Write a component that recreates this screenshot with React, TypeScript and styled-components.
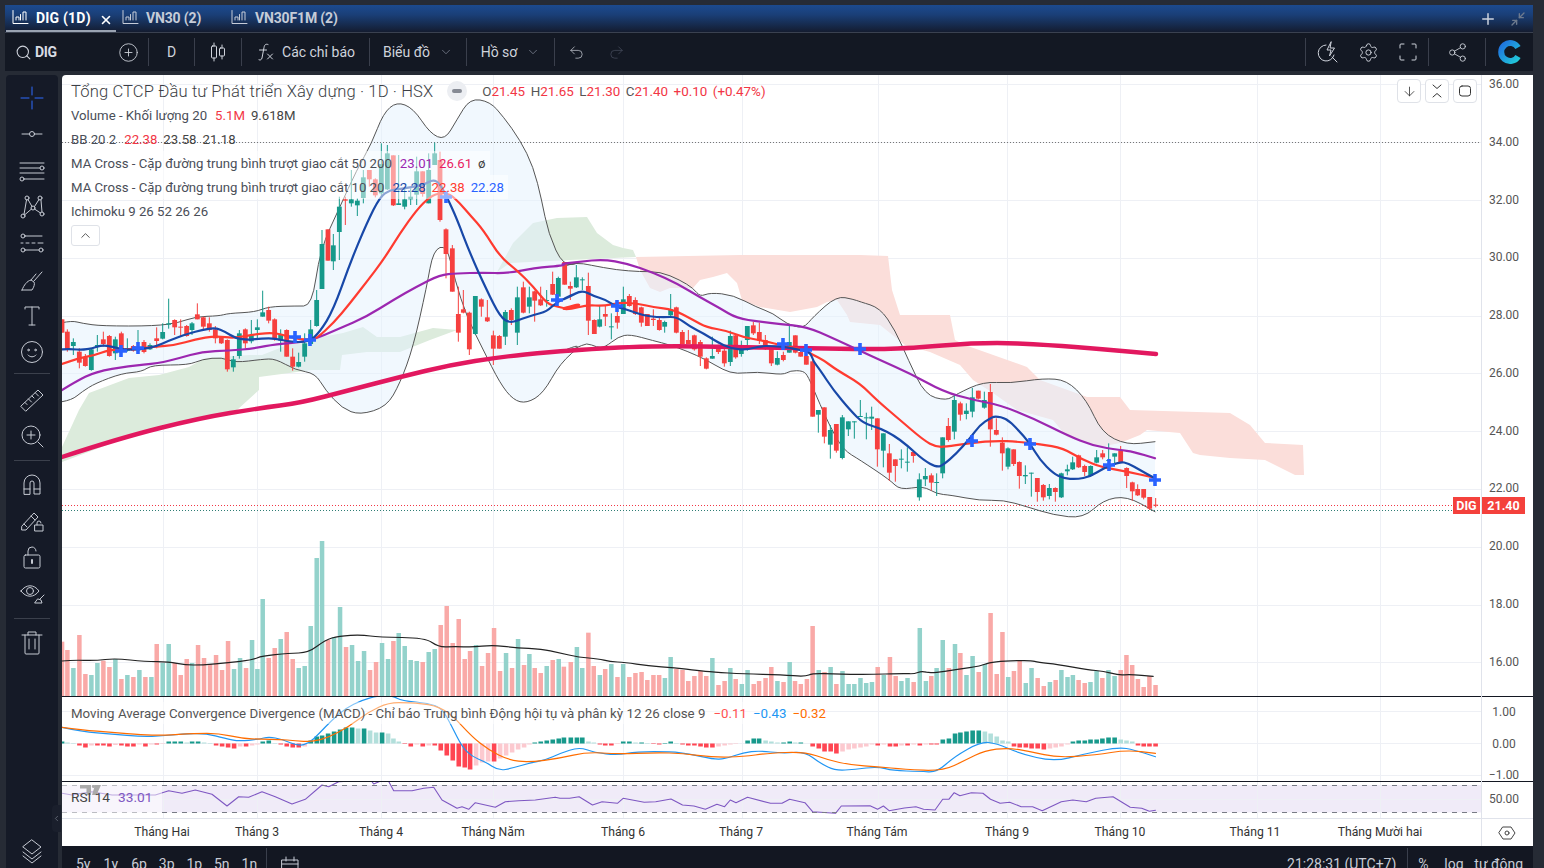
import React from "react";
import styled, { createGlobalStyle } from "styled-components";
import { Search, CirclePlus, Undo2, Redo2, ChevronDown, Settings, Share2, Plus, Minimize2, X, ChevronUp, ArrowDown, ChevronLeft } from "lucide-react";

type P = [number, number];
const z = (x0: number, y0: number, pts: number[][], sx = 3, sy = 3): P[] => pts.map(([x, y]) => [x0 + x / sx, y0 + y / sy]);
const path = (p: P[]) => p.map((q, i) => `${i ? "L" : "M"}${q[0].toFixed(1)} ${q[1].toFixed(1)}`).join("");
const smoothBody = (p: P[]) => {
  let d = "";
  for (let i = 1; i < p.length - 1; i++) {
    const mx = (p[i][0] + p[i + 1][0]) / 2;
    const my = (p[i][1] + p[i + 1][1]) / 2;
    d += `Q${p[i][0].toFixed(1)} ${p[i][1].toFixed(1)} ${mx.toFixed(1)} ${my.toFixed(1)}`;
  }
  const l = p[p.length - 1];
  return d + `L${l[0].toFixed(1)} ${l[1].toFixed(1)}`;
};
const smooth = (p: P[]) => `M${p[0][0].toFixed(1)} ${p[0][1].toFixed(1)}` + smoothBody(p);

const Z6 = (p: number[][]) => z(62, 280, p);
const Z9 = (p: number[][]) => z(300, 90, p);
const Z10 = (p: number[][]) => z(560, 220, p);
const Z7 = (p: number[][]) => z(800, 360, p);
const Z8 = (p: number[][]) => z(62, 530, p);
const Z11 = (p: number[][]) => z(560, 600, p, 2.613, 3);

const ma10: P[] = [
  ...Z6([[0,208],[30,207],[60,210],[90,205],[120,195],[150,200],[190,210],[240,207],[280,200],[320,182],[380,160],[420,150],[460,143],[490,155],[520,175],[560,180],[600,175],[640,175],[680,185],[740,187]]),
  ...Z9([[60,725],[100,660],[150,520],[200,400],[240,320],[270,300],[300,297],[340,290],[370,285],[400,268],[420,282],[440,320],[470,385],[510,490],[560,600],[600,680],[630,700],[670,685],[700,675],[740,665],[770,635],[810,620],[848,600]]),
  ...Z10([[0,242],[30,230],[66,210],[100,228],[140,240],[170,262],[190,265],[230,280],[270,290],[310,292],[350,290],[390,320],[430,340],[470,365],[510,385],[560,390],[600,378],[640,378],[680,382],[720,390],[750,395]]),
  ...Z7([[40,4],[60,30],[100,90],[150,150],[190,190],[240,205],[280,225],[320,255],[370,300],[410,322],[430,315],[470,280],[510,235],[540,195],[570,175],[585,168],[620,176],[650,205],[690,250],[720,300],[760,340],[790,355],[830,358],[870,350],[910,325],[960,305],[985,310],[1020,330],[1065,355]]),
];
const ma20: P[] = [
  ...Z6([[0,252],[50,235],[100,225],[140,210],[200,208],[280,200],[340,195],[400,178],[460,168],[520,175],[580,162],[640,158],[680,170],[710,178],[750,178]]),
  ...Z9([[50,745],[100,700],[150,640],[200,575],[250,510],[300,430],[350,360],[390,320],[420,308],[450,312],[480,340],[510,375],[550,420],[600,500],[650,540],[700,590],[740,640],[770,650],[810,658],[850,640]]),
  ...Z10([[0,266],[30,268],[80,255],[130,258],[180,248],[230,250],[280,262],[340,268],[400,300],[440,322],[500,332],[550,352],[610,362],[670,378],[730,388]]),
  ...Z7([[40,-15],[70,0],[110,30],[180,70],[230,120],[300,180],[370,240],[410,262],[450,258],[520,248],[590,242],[650,245],[720,252],[790,265],[850,300],[900,320],[980,335],[1060,352]]),
];
const ma50: P[] = [
  ...Z6([[0,330],[40,305],[100,275],[200,258],[290,250],[350,235],[420,215],[500,212],[580,205],[640,192],[740,185]]),
  ...Z9([[120,715],[200,680],[280,630],[350,590],[420,555],[470,550],[550,548],[620,550],[700,535],[800,525]]),
  ...Z10([[0,132],[60,125],[130,118],[200,130],[280,158],[350,190],[420,232],[480,265],[530,295],[600,305],[660,312],[740,320],[820,355]]),
  ...Z7([[240,0],[330,40],[430,95],[520,120],[600,135],[700,175],[800,225],[880,258],[960,270],[1000,275],[1065,295]]),
];
const ma200: P[] = [[62,457],[120,438],[200,418],[260,408],[300,403],[350,390],[400,377],[450,365],[500,357],[550,352],[593,349],[627,347],[677,346],[727,347],[793,348],[857,349],[900,349],[985,342],[1050,345],[1100,349],[1156,354]];
const bbUp: P[] = [
  ...Z6([[0,128],[30,122],[60,130],[120,138],[280,138],[350,128],[400,110],[470,108],[500,100],[580,96],[620,80],[700,78],[750,78]]),
  ...Z9([[60,480],[120,350],[170,240],[215,160],[250,70],[290,35],[340,55],[390,130],[435,150],[470,90],[510,25],[570,35],[610,80],[660,150],[700,230],[725,330],[745,430],[790,530],[850,515]]),
  ...Z10([[0,140],[50,128],[90,135],[170,150],[240,155],[300,155],[360,180],[400,205],[420,230],[450,218],[520,225],[590,262],[640,280],[680,312],[730,326],[760,290],[830,228],[880,238],[900,245]]),
  [880,308],[895,330],
  ...Z7([[325,0],[375,105],[440,122],[470,102],[550,65],[630,70],[730,55],[800,60],[860,120],[905,218],[980,255],[1065,245]]),
];
const bbLo: P[] = [
  ...Z6([[0,365],[30,360],[60,335],[100,310],[180,280],[240,275],[270,255],[380,255],[420,238],[480,232],[520,248],[600,238],[640,236],[700,270],[760,280],[790,330],[840,385]]),
  ...Z9([[180,975],[260,950],[300,880],[340,770],[380,590],[400,480],[440,465],[465,570],[500,680],[550,780],[600,880],[640,930],[680,940],[730,910],[780,820],[850,760]]),
  ...Z10([[0,395],[50,385],[80,368],[110,382],[135,382],[175,350],[210,343],[280,362],[330,375],[380,393],[440,420],[490,450],[530,462],[590,455],[670,465],[690,452],[730,452],[745,470],[770,530],[810,620],[850,690],[900,720]]),
  ...Z7([[270,360],[300,390],[370,378],[410,402],[450,405],[540,422],[610,420],[680,440],[760,465],[850,475],[910,420],[980,408],[1065,455]]),
];
const greenA: P[] = [[62,447],[79,410],[89,393],[105,387],[129,378],[159,375],[189,367],[205,358],[219,357],[250,355],[262,355],[295,342],[343,333],[363,327],[377,337],[400,337],[433,328],[457,330],[430,340],[400,352],[367,352],[342,355],[340,370],[312,370],[259,377],[259,390],[237,410],[190,420],[120,440],[62,462]];
const greenB: P[] = [[497,272],[513,243],[533,223],[557,218],[587,217],[597,233],[613,245],[623,248],[633,250],[636,257],[570,260],[510,263]];
const pink: P[] = [[636,257],[740,255],[860,255],[888,256],[892,290],[900,315],[950,315],[955,340],[965,345],[1013,362],[1027,367],[1040,380],[1087,397],[1120,397],[1130,410],[1230,413],[1250,425],[1265,443],[1303,445],[1304,475],[1295,475],[1265,460],[1230,458],[1200,455],[1193,453],[1180,433],[1147,430],[1140,435],[1120,443],[1100,447],[1067,437],[1053,420],[1017,410],[993,393],[973,380],[960,365],[930,352],[905,345],[880,325],[860,323],[850,322],[847,315],[837,300],[827,302],[817,307],[790,312],[760,307],[742,300],[737,283],[727,273],[713,277],[700,280],[693,288],[670,288],[660,292],[650,288],[640,270]];
const volMa: P[] = [
  ...Z8([[0,393],[30,390],[100,392],[160,385],[250,395],[320,395],[370,405],[420,405],[500,398],[570,390],[600,378],[680,370],[740,368],[790,330],[830,318],[900,314],[950,322],[1090,323],[1130,352],[1180,349],[1230,352],[1290,345],[1360,353],[1440,357],[1490,368]]),
  ...Z11([[50,172],[100,176],[130,185],[170,187],[230,198],[300,203],[360,212],[400,216],[480,222],[580,224],[640,230],[660,220],[720,222],[800,224],[900,220],[925,222],[945,213],[970,220],[1040,208],[1100,198],[1120,188],[1160,183],[1230,181],[1250,187],[1300,193],[1380,210],[1420,213],[1460,226],[1490,223],[1550,229]]),
];
const macdBlue: P[] = [
  ...Z8([[0,592],[60,605],[150,612],[240,620],[300,618],[360,612],[430,610],[490,625],[530,634],[590,628],[620,620],[660,628],[710,648],[740,640],[770,612],[810,570],[850,535],[900,510],[950,497],[990,497],[1020,512],[1100,520],[1140,535],[1170,590],[1200,650],[1230,680],[1270,695],[1310,722],[1350,715],[1400,700],[1450,690]]),
  ...Z11([[0,460],[50,441],[90,458],[150,465],[200,455],[290,455],[340,462],[400,478],[430,477],[480,458],[520,452],[580,460],[640,455],[680,490],[720,512],[770,508],[830,500],[870,512],[940,514],[985,517],[1030,470],[1100,425],[1140,430],[1200,460],[1290,485],[1370,462],[1460,441],[1500,450],[1556,470]]),
];
const macdOrange: P[] = [
  ...Z8([[0,592],[60,600],[150,607],[240,615],[300,616],[400,610],[470,610],[540,625],[600,628],[650,628],[700,632],[750,636],[800,622],[860,590],[920,545],[980,518],[1040,518],[1120,525],[1170,555],[1230,620],[1280,660],[1340,690],[1400,697]]),
  ...Z11([[0,475],[70,456],[150,462],[250,458],[320,460],[400,472],[480,470],[540,460],[640,455],[700,480],[760,495],[830,500],[900,508],[1000,513],[1060,480],[1110,452],[1170,443],[1230,455],[1300,473],[1400,465],[1480,450],[1556,460]]),
];
const rsi: P[] = [
  ...Z8([[0,790],[30,795],[60,790],[90,785],[150,795],[280,795],[320,782],[360,790],[400,780],[450,793],[495,828],[530,800],[560,802],[600,785],[640,800],[690,822],[730,808],[780,765],[800,770],[830,755],[890,752],[925,748],[935,762],[975,745],[995,782],[1050,782],[1085,775],[1115,772],[1140,810],[1185,835],[1200,830],[1220,838],[1240,818],[1300,832],[1330,815],[1370,812],[1420,810],[1480,802]]),
  ...Z11([[0,595],[25,595],[50,590],[85,615],[110,605],[150,610],[165,595],[220,607],[250,605],[290,597],[320,615],[350,618],[380,628],[410,613],[430,620],[445,600],[460,608],[490,592],[550,610],[580,610],[600,598],[640,608],[660,635],[700,638],[720,640],[735,618],[810,617],[830,628],[845,618],[860,632],[900,624],[930,620],[950,628],[980,630],[1000,598],[1016,598],[1030,578],[1045,587],[1075,578],[1105,580],[1125,598],[1150,610],[1175,607],[1205,620],[1235,620],[1260,632],[1310,605],[1340,600],[1375,605],[1400,595],[1445,590],[1490,622],[1520,625],[1540,634],[1556,631]]),
];

type Row = [number, string, number, number, number, number];
const cd = (x0: number, y0: number, rows: Row[]) => rows.map(([x, c, t, b, wt, wb]) => ({ x: x0 + x / 3, c, t: y0 + t / 3, b: y0 + b / 3, wt: y0 + wt / 3, wb: y0 + wb / 3 }));
const candles = [
  ...cd(62, 280, [[0,"r",118,158,118,158],[16,"r",155,210,148,215],[34,"g",186,198,175,225],[52,"r",215,248,205,265],[70,"r",232,258,222,260],[88,"g",208,270,205,272],[106,"g",195,200,165,215],[124,"r",178,192,155,200],[142,"r",168,228,165,230],[160,"g",178,220,170,240],[178,"r",160,212,155,225],[196,"g",205,212,175,215],[214,"r",198,212,195,215],[228,"g",205,212,150,222],[246,"r",186,216,180,220],[264,"g",195,208,190,210],[284,"r",175,183,142,205],[302,"g",156,176,130,178],[320,"g",130,134,56,146],[338,"r",120,142,118,165],[356,"r",140,143,118,170],[374,"r",138,168,135,170],[390,"g",130,150,126,165],[406,"r",103,118,70,118],[424,"r",112,140,110,152],[442,"r",130,150,112,155],[460,"r",148,175,138,190],[478,"r",170,190,170,192],[496,"r",180,268,178,275],[514,"g",238,262,228,275],[532,"g",160,228,150,236],[550,"r",148,190,145,205],[568,"g",165,184,120,190],[586,"g",142,150,118,178],[602,"g",97,110,32,110],[620,"r",90,122,80,130],[638,"r",118,178,115,182],[656,"g",162,182,148,215],[674,"r",150,230,148,230],[692,"r",230,260,205,272],[710,"g",246,260,218,262],[728,"g",190,230,160,245],[746,"g",148,192,120,190],[764,"g",60,138,30,140]]),
  ...cd(300, 90, [[66,"g",462,597,420,597],[84,"r",418,512,418,512],[100,"g",466,514,432,540],[118,"g",350,426,320,510],[136,"r",328,332,320,405],[154,"g",328,340,240,350],[172,"g",332,346,325,378],[190,"g",262,324,240,340],[208,"r",240,268,240,290],[226,"r",268,316,265,322],[244,"g",222,310,160,320],[262,"g",190,298,165,300],[280,"r",196,346,196,348],[296,"g",340,345,195,345],[314,"g",328,350,290,358],[332,"g",320,328,295,345],[350,"g",244,314,200,345],[368,"r",244,312,244,320],[386,"g",240,340,190,340],[404,"g",190,225,158,225],[420,"r",210,390,185,395],[438,"r",418,492,415,565],[457,"r",475,605,465,605],[475,"r",672,728,590,755],[490,"r",658,668,600,670],[508,"r",668,778,665,795],[526,"g",618,732,618,735],[544,"r",628,650,625,680],[562,"r",682,694,630,696],[580,"r",736,776,722,825],[598,"r",738,776,735,776],[616,"g",666,740,660,765],[634,"r",660,690,655,705],[652,"g",622,728,590,765],[670,"r",592,668,575,670],[688,"g",622,650,590,670],[704,"r",604,632,602,695],[722,"r",628,646,590,648],[740,"g",630,632,600,650],[758,"r",582,614,545,615],[775,"g",564,620,560,640]]),
  ...cd(560, 220, [[14,"r",126,194,126,194],[31,"r",198,206,185,240],[49,"g",172,202,135,204],[67,"g",178,180,172,210],[85,"r",198,302,158,345],[103,"r",300,342,298,342],[119,"g",298,320,258,322],[136,"r",282,290,258,318],[154,"g",319,321,280,358],[172,"r",288,308,240,326],[190,"g",238,282,200,282],[208,"r",228,258,222,260],[226,"r",240,282,232,285],[244,"r",262,308,260,320],[262,"r",282,318,282,318],[280,"r",296,300,268,318],[298,"r",300,330,290,332],[314,"g",306,320,302,338],[332,"g",268,286,222,290],[349,"r",262,338,260,340],[367,"r",336,372,330,372],[385,"r",360,372,330,372],[403,"r",346,388,344,392],[421,"r",366,410,360,438],[439,"r",415,446,412,448],[457,"g",408,416,350,416],[475,"r",376,396,374,402],[493,"r",392,430,376,440],[511,"g",348,426,332,438],[527,"r",346,412,345,416],[544,"g",378,402,362,410],[562,"g",318,360,318,392],[580,"r",316,340,305,345],[598,"r",336,362,308,372],[616,"r",360,386,345,390],[634,"r",378,430,378,438],[652,"g",414,434,394,436],[670,"r",405,420,395,424],[688,"g",366,398,315,398],[706,"r",346,398,346,400],[722,"r",396,410,394,410],[739,"r",408,434,376,434]]),
  ...cd(800, 360, [[38,"r",4,170,0,170],[55,"g",150,164,150,218],[73,"r",142,230,142,250],[91,"g",210,254,195,296],[109,"r",192,272,192,278],[127,"g",172,294,165,298],[145,"g",184,208,184,228],[163,"g",184,186,184,236],[181,"g",168,170,120,170],[199,"g",172,174,158,238],[215,"g",170,176,140,210],[232,"r",175,268,175,320],[250,"g",220,272,220,322],[268,"r",280,338,252,362],[286,"r",298,318,298,365],[304,"g",296,298,268,325],[322,"g",305,307,262,335],[340,"r",276,288,270,308],[358,"g",358,412,340,422],[376,"g",348,358,324,378],[394,"r",346,368,340,392],[410,"g",366,368,340,408],[428,"g",232,340,232,355],[445,"r",198,240,174,245],[463,"g",120,215,102,238],[481,"r",130,164,125,182],[499,"g",152,162,130,178],[517,"g",112,155,84,172],[535,"r",92,116,92,118],[553,"g",120,143,95,146],[571,"r",96,208,72,260],[589,"r",210,224,175,226],[607,"r",248,280,232,332],[624,"g",265,320,262,328],[641,"r",268,312,268,318],[658,"r",306,348,304,386],[676,"g",345,349,316,372],[694,"g",338,340,338,410],[712,"r",354,396,354,425],[730,"r",375,412,372,422],[748,"g",384,408,372,418],[766,"r",384,396,382,425],[784,"g",340,412,338,414],[802,"g",328,334,314,346],[818,"g",307,328,290,330],[836,"r",286,322,284,324],[854,"r",318,336,314,348],[872,"g",318,348,316,350],[890,"g",292,308,270,310],[908,"r",280,292,270,298],[926,"g",300,303,250,325],[944,"g",280,290,280,310],[962,"r",272,306,258,308],[980,"r",324,348,322,384],[997,"r",367,394,365,422],[1013,"r",387,406,373,408],[1031,"r",387,413,387,418],[1049,"r",411,446,411,450],[1067,"r",434,436,414,442]]),
];

type V = [number, number, string, number];
const v8: V[] = [[0,335,"r",2],[16,360,"r",1],[34,414,"g",0.5],[52,315,"r",-2],[70,432,"r",-4],[88,435,"g",-2],[106,399,"g",-2],[124,392,"r",-2],[142,411,"r",-3],[160,387,"g",-1.5],[178,447,"r",-2],[196,435,"g",-3],[214,441,"r",-3],[232,420,"g",-1],[250,441,"r",-3],[268,441,"g",-1],[284,342,"r",-1],[302,399,"g",-0.5],[320,342,"g",2],[338,399,"r",2],[356,435,"r",2],[374,387,"r",1],[390,399,"g",2],[408,345,"r",2],[426,384,"r",1],[444,402,"r",0.5],[462,375,"r",-2],[480,420,"r",-3],[498,333,"r",-4],[516,417,"g",-5],[534,384,"g",-3],[552,414,"r",-3],[570,330,"g",-2],[586,417,"g",-1],[602,207,"g",2],[620,384,"r",3],[638,354,"r",0.5],[656,327,"g",-1],[674,306,"r",-3],[692,387,"r",-4],[710,414,"g",-4],[728,408,"g",-3],[746,288,"g",3],[764,84,"g",7],[780,33,"g",8],[798,330,"r",10],[816,321,"g",12],[834,231,"g",14],[852,351,"r",16],[870,345,"g",16],[888,393,"g",15],[906,363,"g",15],[924,420,"r",13],[942,396,"r",11],[960,339,"g",11],[978,387,"g",10],[994,333,"r",5],[1010,309,"g",2],[1028,348,"g",-0.5],[1046,390,"g",-3],[1064,393,"g",-1],[1082,396,"r",-3],[1100,366,"g",-2],[1118,357,"g",-2],[1136,285,"r",-7],[1154,228,"r",-12],[1172,339,"r",-17],[1190,267,"r",-23],[1208,387,"r",-24],[1224,363,"r",-26],[1242,345,"g",-22],[1260,408,"r",-19],[1278,369,"r",-18],[1296,294,"r",-18],[1314,423,"r",-15],[1332,369,"g",-12],[1350,414,"r",-9],[1368,327,"g",-6],[1386,405,"r",-4],[1402,372,"g",-1],[1418,414,"r",1],[1436,429,"r",2],[1454,408,"g",3],[1472,390,"r",4],[1490,387,"g",5]];
const v11: V[] = [[10,200,"r",6],[28,186,"r",6],[44,141,"g",6],[58,204,"g",6],[74,98,"r",2],[88,198,"r",1],[104,225,"g",-1],[118,207,"r",-2],[134,192,"g",-2],[150,231,"r",-0.5],[165,192,"g",2],[181,231,"r",2],[197,219,"r",1],[213,216,"r",1],[228,240,"r",0.5],[244,225,"r",-0.5],[259,225,"r",-1],[274,234,"g",0.5],[289,171,"g",2],[304,207,"r",0.5],[320,210,"r",-1],[335,243,"r",-2],[351,228,"r",-2],[367,213,"r",-3],[382,228,"r",-4],[398,174,"g",-4],[414,255,"r",-3],[430,243,"r",-2],[445,204,"g",-1],[459,237,"r",-0.5],[475,252,"g",0],[490,210,"g",3],[506,252,"r",5],[520,243,"r",5],[537,234,"r",3],[552,201,"r",2],[568,243,"g",1],[584,246,"r",1],[600,186,"g",2],[614,243,"r",1],[629,252,"r",1],[645,237,"r",0],[660,78,"r",-3],[676,210,"g",-5],[691,216,"r",-8],[707,201,"g",-8],[722,252,"r",-10],[738,213,"g",-8],[754,252,"g",-6],[769,252,"g",-5],[785,234,"g",-4],[800,249,"g",-3],[815,246,"g",-1],[830,201,"r",-2],[846,225,"g",-1],[862,171,"r",-3],[877,228,"r",-3],[892,243,"g",-2],[908,234,"g",-2],[924,246,"r",-1],[940,84,"g",-2],[956,243,"g",-1],[970,228,"r",-1],[984,204,"g",-1],[1000,120,"g",4],[1016,204,"r",5],[1032,132,"g",10],[1046,159,"r",11],[1062,225,"g",12],[1078,168,"g",13],[1094,216,"r",13],[1110,192,"g",12],[1125,39,"r",10],[1141,222,"r",7],[1156,96,"r",3],[1171,231,"g",2],[1186,213,"r",-3],[1201,180,"r",-4],[1217,249,"g",-4],[1232,204,"g",-5],[1248,234,"r",-5],[1264,258,"r",-6],[1280,246,"g",-5],[1295,240,"r",-4],[1310,210,"g",-3],[1326,231,"g",-1],[1340,225,"g",2],[1355,240,"r",3],[1371,249,"r",3],[1386,246,"g",4],[1402,213,"g",4],[1417,234,"r",5],[1433,210,"g",6],[1449,228,"g",6],[1465,210,"r",4],[1480,165,"r",3],[1495,195,"r",2],[1510,237,"r",-2],[1525,261,"r",-3],[1540,228,"r",-3],[1556,255,"r",-3]];
const bars = [
  ...v8.map(([x, t, c, h]) => ({ x: 62 + x / 3, top: 530 + t / 3, c, h })),
  ...v11.map(([x, t, c, h]) => ({ x: 560 + x / 2.613, top: 600 + t / 3, c, h })),
];
const crosses: P[] = [[121,351],[138,348],[295,337],[310,340],[446,197],[557,300],[617,306],[783,344],[806,350],[860,349],[972,441],[1030,444],[1109,465],[1155,480]];
const monthX = [163, 257, 381, 493, 623, 742, 878, 1007, 1120, 1257, 1380];
const months = ["Tháng Hai","Tháng 3","Tháng 4","Tháng Năm","Tháng 6","Tháng 7","Tháng Tám","Tháng 9","Tháng 10","Tháng 11","Tháng Mười hai"];
const monthC = [162, 257, 381, 493, 623, 741, 877, 1007, 1120, 1255, 1380];
const priceTicks = ["36.00","34.00","32.00","30.00","28.00","26.00","24.00","22.00","20.00","18.00","16.00"];

const Global = createGlobalStyle`
  html, body { margin: 0; padding: 0; height: 100%; overflow: hidden; background: #262b35; }
  #root { height: 100%; }
  * { box-sizing: border-box; }
`;
const Page = styled.div`
  height: 868px; overflow: hidden; display: flex; flex-direction: column;
  padding: 5px 11px 0 5px; font-family: Roboto, "Liberation Sans", sans-serif; color: #d1d4dc;
`;
const TabBar = styled.div`
  height: 28px; flex: none; display: flex; align-items: stretch; padding-left: 1px;
  background: linear-gradient(180deg, #1c4a8e 0%, #1a3f78 35%, #162a4c 75%, #141c30 100%);
  border-bottom: 1px solid #3a4150;
`;
const Tab = styled.div<{ $w: number; $active?: boolean }>`
  width: ${p => p.$w}px; display: flex; align-items: center; gap: 7px; padding-left: 6px;
  font-size: 14px; font-weight: 700; letter-spacing: ${p => (p.$active ? "0.2px" : "-0.15px")}; color: ${p => (p.$active ? "#fff" : "#c6ccd8")};
  border-bottom: 2px solid ${p => (p.$active ? "#9aa3b2" : "transparent")};
  svg { flex: none; }
`;
const TabClose = styled.span`display: flex; margin-left: 1px; margin-top: 4px; color: #fff;`;
const TabSpacer = styled.div`flex: 1;`;
const TabAction = styled.div<{ $w: number; $dim?: boolean }>`
  width: ${p => p.$w}px; display: flex; align-items: center; justify-content: center; color: ${p => (p.$dim ? "#6d7a8e" : "#cdd3de")};
`;
const TopBar = styled.div`
  height: 38px; flex: none; display: flex; align-items: center; background: #131823; font-size: 14px; color: #cfd3dc;
`;
const TopCell = styled.div<{ $w: number; $sep?: boolean; $start?: boolean; $dim?: boolean }>`
  width: ${p => p.$w}px; height: 28px; flex: none; display: flex; align-items: center;
  justify-content: ${p => (p.$start ? "flex-start" : "center")}; gap: 6px;
  padding-left: ${p => (p.$start ? "10px" : "0")}; color: ${p => (p.$dim ? "#4a5060" : "inherit")};
  border-right: ${p => (p.$sep ? "1px solid #3a3f4c" : "0")};
`;
const Sym = styled.span`font-weight: 700; font-size: 14px; margin-left: -3px; letter-spacing: -0.3px; color: #d8dbe2;`;
const Chev = styled.span`display: flex; color: #8b90a0; margin-left: 3px;`;
const TopSpacer = styled.div`flex: 1; height: 28px; border-right: 1px solid #3a3f4c;`;
const Body = styled.div`flex: 1; display: flex; margin-top: 4px; min-height: 0;`;
const LeftBar = styled.div`
  width: 52px; margin: 0 4px 0 1px; flex: none; display: flex; flex-direction: column; align-items: center;
  padding-top: 5px; background: #151a27; color: #c6cad3; border-radius: 4px 4px 0 0;
`;
const ToolBtn = styled.div<{ $h?: number; $bottom?: boolean }>`
  height: ${p => p.$h ?? 36.3}px; width: 100%; display: flex; align-items: center; justify-content: center; flex: none;
  margin-top: ${p => (p.$bottom ? "auto" : "0")};
`;
const ToolSep = styled.div<{ $mt: number; $mb: number }>`
  width: 36px; height: 1px; background: #3b404c; margin: ${p => p.$mt}px 0 ${p => p.$mb}px; flex: none;
`;
const Main = styled.div`flex: 1; min-width: 0; display: flex; flex-direction: column; position: relative;`;
const ChartFrame = styled.div`
  height: 771px; flex: none; display: flex; flex-direction: column; background: #fff; color: #444;
  border-radius: 4px 0 0 0; overflow: hidden;
`;
const Pane = styled.div<{ $h: number; $line?: boolean }>`
  height: ${p => p.$h}px; flex: none; display: grid; grid-template-columns: 1420px 1fr;
  border-bottom: ${p => (p.$line ? "1px solid #131722" : "0")};
`;
const Plot = styled.div`position: relative; overflow: hidden; border-right: 1px solid #e0e3eb; svg { display: block; }`;
const AxisCol = styled.div<{ $rows: number; $top: number }>`
  position: relative; display: grid; grid-auto-rows: ${p => p.$rows}px; padding-top: ${p => p.$top}px; justify-items: center;
`;
const AxisLabel = styled.div`
  font-size: 12px; line-height: 16px; height: 16px; color: #555; padding-right: 7px;
`;
const PriceTag = styled.div`
  position: absolute; left: -29px; top: 422px; height: 17px; display: flex; font-size: 12.5px; font-weight: 700; line-height: 17px; color: #fff; white-space: nowrap;
`;
const TagName = styled.span`width: 27px; background: #f4413c; text-align: center; margin-right: 2px;`;
const TagPrice = styled.span`width: 43px; background: #f4413c; text-align: center;`;
const Legend = styled.div`
  position: absolute; left: 9px; top: 4px; display: flex; flex-direction: column; gap: 0; font-size: 13.2px;
`;
const LegRow = styled.div<{ $veil?: boolean }>`
  height: 24px; display: flex; align-items: center; white-space: nowrap; gap: 8px; width: max-content;
  color: #4a4e58; background: ${p => (p.$veil ? "rgba(255,255,255,.5)" : "transparent")}; padding-right: ${p => (p.$veil ? "4px" : "0")};
`;
const Title = styled.span`font-size: 16.6px; color: #3d3f46; font-weight: 300; letter-spacing: .12px;`;
const Val = styled.span<{ $c: string; $ml?: number }>`color: ${p => p.$c}; margin-left: ${p => p.$ml ?? 0}px;`;
const Eye = styled.span`
  width: 20px; height: 20px; border-radius: 50%; background: #eceef2; display: flex; align-items: center; justify-content: center; margin: 0 7px 0 6px;
  &::after { content: ""; width: 10px; height: 4px; border-radius: 2px; background: #868a94; }
`;
const OHLC = styled.span`display: flex; gap: 5.5px; font-size: 13.4px; color: #555;`;
const CollapseBtn = styled.div`
  width: 29px; height: 21px; border: 1px solid #dfe2e8; border-radius: 3px; background: #fff; display: flex; align-items: center; justify-content: center; color: #444; margin-top: 2px;
`;
const CornerBtns = styled.div`position: absolute; right: 4px; top: 4px; display: flex; gap: 4px;`;
const CornerBtn = styled.div`
  width: 24px; height: 24px; border: 1px solid #dfe2e8; border-radius: 4px; background: #fff; display: flex; align-items: center; justify-content: center; color: #333;
`;
const SubLegend = styled.div`position: absolute; left: 9px; top: 5px; font-size: 13.3px; display: flex; gap: 8px; white-space: nowrap; color: #555; background: rgba(255,255,255,.45); height: 22px; align-items: center;`;
const RsiLegend = styled.div`position: absolute; left: 0; top: 3px; padding: 0 10px 4px 9px; font-size: 13.7px; display: flex; gap: 8px; white-space: nowrap; color: #444; background: rgba(255,255,255,.5); height: 28px; align-items: center;`;
const TvMark = styled.svg`position: absolute; left: 17px; top: 1px;`;
const TimeAxis = styled.div`
  height: 28px; flex: none; display: grid; grid-template-columns: 1420px 1fr; border-top: 1px solid #e0e3eb; 
`;
const TimeTrack = styled.div`position: relative; border-right: 1px solid #e0e3eb;`;
const Month = styled.span`
  position: absolute; top: 5px; transform: translateX(-50%); font-size: 12.2px; line-height: 16px; color: #333; white-space: nowrap;
`;
const AxisGear = styled.div`display: flex; align-items: center; justify-content: center; color: #444; padding-right: 2px;`;
const BottomBar = styled.div`
  height: 38px; flex: none; display: flex; align-items: flex-start; padding: 10px 10px 0 14px; background: #131722; font-size: 14px; color: #c8ccd6; white-space: nowrap;
`;
const Range = styled.span`width: 27.6px; flex: none;`;
const BarSep = styled.span<{ $ml: number; $mr: number }>`width: 1px; height: 26px; background: #3a3f4c; margin: -8px ${p => p.$mr}px 0 ${p => p.$ml}px; flex: none;`;
const BarSpacer = styled.span`flex: 1;`;
const BarItem = styled.span<{ $w: number }>`width: ${p => p.$w}px; flex: none;`;
const Handle = styled.div`
  position: absolute; left: -10px; top: 730px; width: 9px; height: 27px; background: #1a1f2c; border-radius: 4px 0 0 4px; display: flex; align-items: center; justify-content: center; color: #8a8f9c;
`;
const Glyph = styled.svg.attrs({ fill: "none", stroke: "currentColor" })``;

const I = ({ s = 28, w = 1, children, vb = 28 }: { s?: number; w?: number; children: React.ReactNode; vb?: number }) => (
  <Glyph width={s} height={s} viewBox={`0 0 ${vb} ${vb}`} strokeWidth={w} strokeLinecap="round" strokeLinejoin="round">{children}</Glyph>
);
const TabChart = () => (
  <I s={17} vb={17}><path d="M1 1.5V14.5H16" /><path d="M4 11V8h3v3M8.5 11V5.5M11 11V3h3v8" /></I>
);
const Plot2 = ({ x, y, w, h, children }: { x: number; y: number; w: number; h: number; children: React.ReactNode }) => (
  <svg width={w} height={h} viewBox={`${x} ${y} ${w} ${h}`}>{children}</svg>
);
const Grid = ({ ys, y0, y1 }: { ys: number[]; y0: number; y1: number }) => (
  <g stroke="#eef0f5" strokeWidth="1">
    {ys.map(y => <line key={y} x1={62} x2={1482} y1={y + 0.5} y2={y + 0.5} />)}
    {monthX.map(x => <line key={x} x1={x + 0.5} x2={x + 0.5} y1={y0} y2={y1} />)}
  </g>
);
const Line = ({ p, c, w, o, raw }: { p: P[]; c: string; w: number; o?: number; raw?: boolean }) => (
  <path d={raw ? path(p) : smooth(p)} fill="none" stroke={c} strokeWidth={w} strokeLinejoin="round" strokeLinecap="round" opacity={o} />
);

export default function App() {
  const lo = [...bbLo].reverse();
  const bb = smooth(bbUp) + `L${lo[0][0]} ${lo[0][1]}` + smoothBody(lo) + "Z";
  return (
    <Page>
      <Global />
      <TabBar>
        <Tab $w={110} $active><TabChart />DIG (1D)<TabClose><X size={14} strokeWidth={2.8} /></TabClose></Tab>
        <Tab $w={109}><TabChart />VN30 (2)</Tab>
        <Tab $w={120}><TabChart />VN30F1M (2)</Tab>
        <TabSpacer />
        <TabAction $w={30}><Plus size={18} strokeWidth={2} /></TabAction>
        <TabAction $w={30} $dim><Minimize2 size={16} strokeWidth={2} /></TabAction>
      </TabBar>
      <TopBar>
        <TopCell $w={103} $start><Search size={17} strokeWidth={1.5} /><Sym>DIG</Sym></TopCell>
        <TopCell $w={41} $sep><CirclePlus size={21} strokeWidth={1} /></TopCell>
        <TopCell $w={46} $sep>D</TopCell>
        <TopCell $w={47} $sep>
          <I s={20} vb={20}><path d="M6 1v3M6 16v3M14 3v3M14 14v3" /><rect x="3.5" y="4" width="5" height="12" rx="1" /><rect x="11.5" y="6" width="5" height="8" rx="1" /></I>
        </TopCell>
        <TopCell $w={128} $sep>
          <I s={20} vb={20}><path d="M12 2.5c-2.5-1-3.5.5-4 3L6 16c-.4 1.8-1.6 2.4-3 1.8M3.5 8h7" /><path d="M11.5 12l5 5M16.5 12l-5 5" /></I>
          <span>Các chỉ báo</span>
        </TopCell>
        <TopCell $w={97} $sep>Biểu đồ<Chev><ChevronDown size={14} strokeWidth={1.2} /></Chev></TopCell>
        <TopCell $w={88} $sep>Hồ sơ<Chev><ChevronDown size={14} strokeWidth={1.2} /></Chev></TopCell>
        <TopCell $w={42}><Undo2 size={17} strokeWidth={1} /></TopCell>
        <TopCell $w={38} $dim><Redo2 size={17} strokeWidth={1} /></TopCell>
        <TopSpacer />
        <TopCell $w={43}>
          <I s={24} vb={24}><path d="M10 5a8 8 0 1 0 8 10" /><path d="M15 2l-4 8h4l-1.500 6 5-8h-4z" /><path d="M16 17l5 5" /></I>
        </TopCell>
        <TopCell $w={38}><Settings size={21} strokeWidth={1.1} /></TopCell>
        <TopCell $w={42} $sep>
          <I s={20} vb={20}><path d="M2 6V3a1 1 0 0 1 1-1h3M14 2h3a1 1 0 0 1 1 1v3M18 14v3a1 1 0 0 1-1 1h-3M6 18H3a1 1 0 0 1-1-1v-3" /></I>
        </TopCell>
        <TopCell $w={57} $sep><Share2 size={21} strokeWidth={1} /></TopCell>
        <TopCell $w={47}>
          <svg width="26" height="26" viewBox="0 0 26 26">
            <defs><linearGradient id="lg" x1="0" y1="0" x2="1" y2="1"><stop offset="0" stopColor="#1f6fe0" /><stop offset="1" stopColor="#21c9d8" /></linearGradient></defs>
            <path d="M21 8.500A9 9 0 1 0 21 17.500" fill="none" stroke="url(#lg)" strokeWidth="6" />
          </svg>
        </TopCell>
      </TopBar>
      <Body>
        <LeftBar>
          <ToolBtn><I><path d="M14 3v8M14 17v8M3 14h8M17 14h8" stroke="#2f6bff" /></I></ToolBtn>
          <ToolBtn><I><path d="M4 14h7.500M16.500 14H24" /><circle cx="14" cy="14" r="2.500" /></I></ToolBtn>
          <ToolBtn><I><path d="M2 6h24M2 11h20M2 16h24M6 22h20" /><circle cx="24" cy="11" r="2" /><circle cx="4" cy="22" r="2" /></I></ToolBtn>
          <ToolBtn><I><circle cx="9" cy="5" r="2" /><circle cx="22" cy="5" r="2" /><circle cx="5" cy="23" r="2" /><circle cx="24" cy="21" r="2" /><circle cx="15" cy="15" r="2" /><path d="M6 21.500L8.500 7M10 6.500l4 7M16.500 13.500L21 6.500M23 7l1 12M13.500 16L6.500 22M16.500 16l6 4" /></I></ToolBtn>
          <ToolBtn><I><circle cx="5" cy="7" r="2" /><path d="M7 7h17M3 14h2M8 14h3M14 14h3M20 14h5" /><circle cx="5" cy="21" r="2" /><circle cx="23" cy="21" r="2" /><path d="M7 21h14" /></I></ToolBtn>
          <ToolBtn><I><path d="M4 24h10c2-3 3-6 2-8l-3-2c-4 1-7 5-9 10zM16 15l8-9M13 14l5-6" /></I></ToolBtn>
          <ToolBtn><I><path d="M7 7V5h14v2M14 5v18M11 23h6" /></I></ToolBtn>
          <ToolBtn><I><circle cx="14" cy="14" r="10.500" /><circle cx="10.500" cy="12" r=".8" /><circle cx="17.500" cy="12" r=".8" /><path d="M10 17c2 2.500 6 2.500 8 0" /></I></ToolBtn>
          <ToolSep $mt={3} $mb={7} />
          <ToolBtn><I><path d="M3 20L20 4l5 5L8 25z" /><path d="M7 16.500l2 2M10.500 13l3 3M14 10l2 2M17.500 7l3 3" /></I></ToolBtn>
          <ToolBtn><I><circle cx="13" cy="13" r="9" /><path d="M9 13h8M13 9v8M20 20l5 5" /></I></ToolBtn>
          <ToolSep $mt={6} $mb={5} />
          <ToolBtn><I><path d="M6 24V13a8 8 0 0 1 16 0v11h-6V13a2 2 0 0 0-4 0v11zM6 19h6M16 19h6" /></I></ToolBtn>
          <ToolBtn><I><path d="M4 20L16 7l4 4L8 24H4zM13 10l4 4M6 18l3 3" /><rect x="17" y="19" width="8" height="6" /><path d="M19 19v-2a2 2 0 0 1 4 0" /></I></ToolBtn>
          <ToolBtn><I><rect x="6" y="12" width="16" height="13" rx="1.500" /><path d="M10 12V8a4 4 0 0 1 8 0" /><path d="M14 17v3" strokeWidth="2" /></I></ToolBtn>
          <ToolBtn><I><path d="M3 12c5-7 13-7 18 0-5 7-13 7-18 0z" /><circle cx="12" cy="12" r="3.500" /><path d="M17 24h7l-1-3-3-1zM22 20l4-4" /></I></ToolBtn>
          <ToolSep $mt={7} $mb={6} />
          <ToolBtn><I><path d="M4 6h20M10 6V3h8v3M7 6v18a1 1 0 0 0 1 1h12a1 1 0 0 0 1-1V6M11 10v10M17 10v10" /></I></ToolBtn>
          <ToolBtn $bottom $h={36}><I><path d="M14 4l9 7-9 7-9-7zM5 16l9 7 9-7M5 20l9 7 9-7" /></I></ToolBtn>
        </LeftBar>
        <Main>
          <Handle><ChevronLeft size={9} strokeWidth={1.5} /></Handle>
          <ChartFrame>
            <Pane $h={622} $line>
              <Plot>
                <Plot2 x={62} y={75} w={1420} h={621}>
                  <Grid ys={[84, 142, 200, 258, 316, 373, 431, 489, 547, 605, 662]} y0={75} y1={696} />
                  {bars.map((b, i) => <rect key={i} x={b.x - 2.2} y={b.top} width={4.5} height={696 - b.top} fill={b.c === "r" ? "#f9a9a7" : "#93d2cb"} />)}
                  <path d={path(greenA) + "Z"} fill="#dcebdc" />
                  <path d={path(greenB) + "Z"} fill="#dcebdc" />
                  <path d={path(pink) + "Z"} fill="#fbdeda" />
                  <path d={bb} fill="#e3f2fd" opacity=".5" />
                  <line x1={62} x2={1482} y1={142.5} y2={142.5} stroke="#777" strokeDasharray="1 2" />
                  <line x1={62} x2={1482} y1={505.5} y2={505.5} stroke="#f23645" strokeDasharray="1 2" />
                  <line x1={62} x2={1482} y1={510.5} y2={510.5} stroke="#2f7d75" strokeDasharray="1 2" />
                  <Line p={bbUp} c="#555" w={1} />
                  <Line p={bbLo} c="#555" w={1} />
                  <Line p={volMa} c="#222" w={1.2} />
                  {candles.map((c, i) => {
                    const col = c.c === "r" ? "#f6403f" : "#15998a";
                    return (
                      <g key={i} fill={col}>
                        <rect x={c.x - 0.5} y={c.wt} width={1} height={Math.max(c.wb - c.wt, 1)} />
                        <rect x={c.x - 2.4} y={c.t} width={4.8} height={Math.max(c.b - c.t, 1)} />
                      </g>
                    );
                  })}
                  <Line p={ma200} c="#e2185f" w={4.4} />
                  <Line p={ma50} c="#9c27b0" w={2.2} />
                  <Line p={ma20} c="#ff3b30" w={2.2} />
                  <Line p={ma10} c="#1848a8" w={2.2} />
                  {crosses.map(([x, y], i) => (
                    <path key={i} d={`M${x - 6} ${y}H${x + 6}M${x} ${y - 6}V${y + 6}`} stroke="#2962ff" strokeWidth={3.6} />
                  ))}
                </Plot2>
                <Legend>
                  <LegRow>
                    <Title>Tổng CTCP Đầu tư Phát triển Xây dựng · 1D · HSX</Title>
                    <Eye />
                    <OHLC>
                      <span>O<Val $c="#f23645">21.45</Val></span>
                      <span>H<Val $c="#f23645">21.65</Val></span>
                      <span>L<Val $c="#f23645">21.30</Val></span>
                      <span>C<Val $c="#f23645">21.40</Val></span>
                      <Val $c="#f23645">+0.10</Val>
                      <Val $c="#f23645">(+0.47%)</Val>
                    </OHLC>
                  </LegRow>
                  <LegRow>Volume - Khối lượng 20<Val $c="#f23645">5.1M</Val><Val $c="#444" $ml={-2}>9.618M</Val></LegRow>
                  <LegRow>BB 20 2<Val $c="#f23645">22.38</Val><Val $c="#444" $ml={-2}>23.58</Val><Val $c="#444" $ml={-2}>21.18</Val></LegRow>
                  <LegRow $veil>MA Cross - Cặp đường trung bình trượt giao cắt 50 200<Val $c="#9c27b0">23.01</Val><Val $c="#e91e63" $ml={-2}>26.61</Val><Val $c="#444" $ml={-2}>ø</Val></LegRow>
                  <LegRow $veil>MA Cross - Cặp đường trung bình trượt giao cắt 10 20<Val $c="#1848a8">22.28</Val><Val $c="#ff3b30" $ml={-2}>22.38</Val><Val $c="#2962ff" $ml={-2}>22.28</Val></LegRow>
                  <LegRow>Ichimoku 9 26 52 26 26</LegRow>
                  <CollapseBtn><ChevronUp size={15} strokeWidth={1.4} /></CollapseBtn>
                </Legend>
                <CornerBtns>
                  <CornerBtn><ArrowDown size={15} strokeWidth={1.3} /></CornerBtn>
                  <CornerBtn><I s={18} vb={18}><path d="M5 3l4 3.500L13 3M5 15l4-3.500 4 3.500" /></I></CornerBtn>
                  <CornerBtn><I s={16} vb={16}><rect x="2.500" y="3" width="11" height="10" rx="2.500" /></I></CornerBtn>
                </CornerBtns>
              </Plot>
              <AxisCol $rows={57.75} $top={1}>
                {priceTicks.map(t => <AxisLabel key={t}>{t}</AxisLabel>)}
                <PriceTag><TagName>DIG</TagName><TagPrice>21.40</TagPrice></PriceTag>
              </AxisCol>
            </Pane>
            <Pane $h={85} $line>
              <Plot>
                <Plot2 x={62} y={697} w={1420} h={84}>
                  <Grid ys={[711, 743, 775]} y0={697} y1={781} />
                  {bars.map((b, i) => {
                    const prev = i ? bars[i - 1].h : 0;
                    const col = b.h >= 0 ? (b.h >= prev ? "#17998b" : "#b2dfdb") : (b.h <= prev ? "#ff4552" : "#fcc9cf");
                    return <rect key={i} x={b.x - 2.2} y={b.h >= 0 ? 743.5 - b.h : 743.5} width={4.6} height={Math.abs(b.h)} fill={col} />;
                  })}
                  <Line p={macdBlue} c="#2196f3" w={1.2} />
                  <Line p={macdOrange} c="#ff6d00" w={1.2} />
                </Plot2>
                <SubLegend>
                  <span>Moving Average Convergence Divergence (MACD) - Chỉ báo Trung bình Động hội tụ và phân kỳ 12 26 close 9</span>
                  <Val $c="#ff5252">−0.11</Val><Val $c="#2196f3" $ml={-2}>−0.43</Val><Val $c="#ff6d00" $ml={-2}>−0.32</Val>
                </SubLegend>
              </Plot>
              <AxisCol $rows={31.7} $top={7}>
                <AxisLabel>1.00</AxisLabel><AxisLabel>0.00</AxisLabel><AxisLabel>−1.00</AxisLabel>
              </AxisCol>
            </Pane>
            <Pane $h={36}>
              <Plot>
                <Plot2 x={62} y={782} w={1420} h={36}>
                  <rect x={62} y={785} width={1420} height={27.5} fill="#f0ebf8" />
                  <Grid ys={[799]} y0={782} y1={818} />
                  <Line p={rsi} c="#7e57c2" w={1.1} raw />
                  <line x1={62} x2={1482} y1={785.5} y2={785.5} stroke="#787b86" strokeDasharray="5 5" />
                  <line x1={62} x2={1482} y1={812.5} y2={812.5} stroke="#787b86" strokeDasharray="5 5" />
                </Plot2>
                <TvMark width="24" height="12" viewBox="0 0 24 12">
                  <path d="M1 2h11v10H7.500V5.500H1zM16 2h6l-4.500 10H13z" fill="#555" />
                  <circle cx="14.500" cy="3.500" r="1.600" fill="#555" />
                </TvMark>
                <RsiLegend>RSI 14<Val $c="#7e57c2">33.01</Val></RsiLegend>
              </Plot>
              <AxisCol $rows={16} $top={9}>
                <AxisLabel>50.00</AxisLabel>
              </AxisCol>
            </Pane>
            <TimeAxis>
              <TimeTrack>
                {months.map((m, i) => <Month key={m} style={{ left: monthC[i] - 62 }}>{m}</Month>)}
              </TimeTrack>
              <AxisGear>
                <I s={18} vb={18}><path d="M5 3h8l4 6-4 6H5L1 9z" /><circle cx="9" cy="9" r="2" /></I>
              </AxisGear>
            </TimeAxis>
          </ChartFrame>
          <BottomBar>
            {["5y","1y","6p","3p","1p","5n","1n"].map(r => <Range key={r}>{r}</Range>)}
            <BarSep $ml={-3} $mr={14} />
            <I s={18} vb={18}><path d="M1 4h16v12H1zM1 8h16M5 1v4M13 1v4" /></I>
            <BarSpacer />
            <span>21:28:31 (UTC+7)</span>
            <BarSep $ml={11} $mr={10} />
            <BarItem $w={26}>%</BarItem>
            <BarItem $w={30}>log</BarItem>
            <span>tự động</span>
          </BottomBar>
        </Main>
      </Body>
    </Page>
  );
}
